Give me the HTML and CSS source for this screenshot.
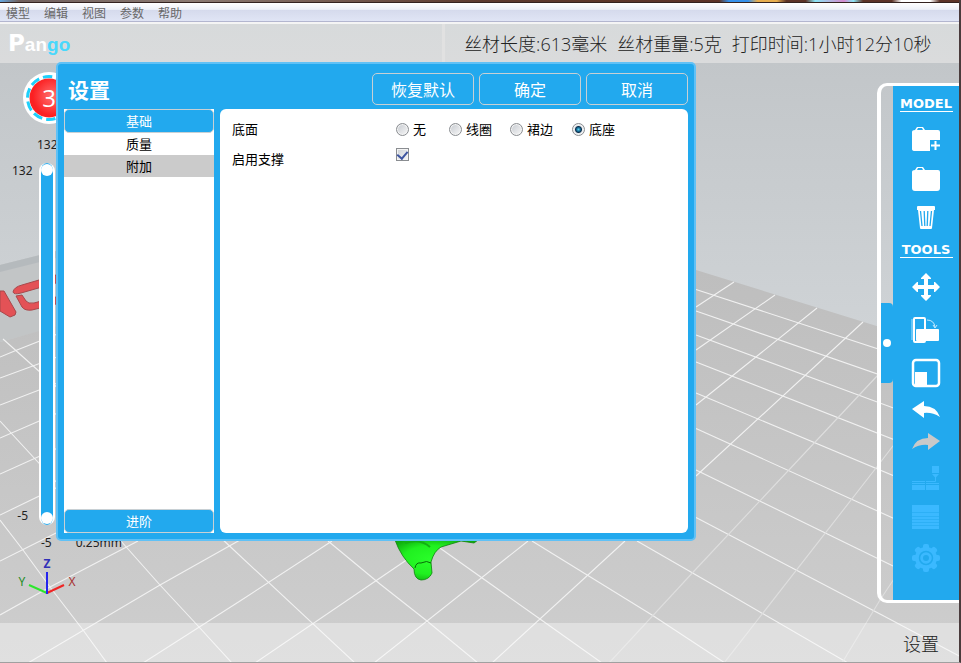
FILE: index.html
```html
<!DOCTYPE html>
<html lang="zh-CN">
<head>
<meta charset="utf-8">
<title>Pango</title>
<link rel="stylesheet" href="styles.css">
</head>
<body>
<div class="app">
  <svg class="scene" viewBox="0 0 961 663" preserveAspectRatio="none" aria-hidden="true">
    <defs>
      <linearGradient id="sky" x1="0" y1="60" x2="0" y2="350" gradientUnits="userSpaceOnUse"><stop offset="0" stop-color="#c2c6c9"/><stop offset="1" stop-color="#d0d4d7"/></linearGradient>
      <linearGradient id="floor" x1="0" y1="270" x2="0" y2="663" gradientUnits="userSpaceOnUse"><stop offset="0" stop-color="#bebebe"/><stop offset="1" stop-color="#cecece"/></linearGradient>
      <radialGradient id="green" cx="45%" cy="50%" r="60%"><stop offset="0" stop-color="#2aff2a"/><stop offset=".6" stop-color="#20f020"/><stop offset="1" stop-color="#0eaa0e"/></radialGradient>
    </defs>
    <rect width="961" height="663" fill="url(#sky)"/>
    <path d="M0 265 60 250V326L0 342Z" fill="#c2c5c6"/>
    <path d="M0 265 60 250V257L0 272Z" fill="#b5babd"/>
    <path d="M0 342 320 252 636 252 696 270 961 352V663H0Z" fill="url(#floor)"/>
    <g fill="#e35256" stroke="#a8484b" stroke-width="1">
      <path d="M0 291 4 291 16 312 15 315 10 317 0 311Z"/>
      <path d="M13 292Q14 287 22 285L56 275V283L21 293Q14 295 13 292Z"/>
      <path d="M16 296 22 295 26 301Q28 304 34 303L56 297V304L32 310Q25 311 22 307Z"/>
    </g>
    <g fill="none" stroke="#f1f1f1" stroke-width="1.1">
      <path d="M696 289.5 961 376M696 311 961 403M696 335 961 433M696 362 961 466M696 393 961 504M696 428.5 961 549M696 470 961 599M696 517.5 880 614 961 657M637 541 710 583 848 663M532 541 652 615 725 663M430 541 540 619 602 663M328 541 380 584 427 621 478 663M221 538 355 663M120 540 160 585 199 627 232 663M0 520 23 550 50 587 83 630 107 663M0 421 60 486M3 339 60 390"/>
      <path d="M734 282 696 307M775 295 696 350M817 308 696 405M863 322 696 476M625 541 492 663M528 541 374 663M433 541 405 561 255 663M332 541 240 601 143 663M240 540 160 585 28 663M138 541 50 587 0 615M60 531 0 561M60 486 0 515M60 447 0 474M60 412 0 438M60 382 0 405M60 356 0 378M60 333 17 350 0 357"/>
      <path stroke="#dedede" d="M878 375 696 569 609 663M916 416 876 468 724 663M920 540 880 600 842 663"/>
    </g>
    <path d="M395 540H478L474 543 461 541 441 547Q434 551 431 562L432 573Q429 580 421 580 414 579 414 569 401 557 395 540Z" fill="url(#green)" stroke="#0b830b" stroke-width=".8"/>
    <path d="M405 543Q420 538 430 547" fill="none" stroke="#13b013" stroke-width="2"/>
    <path d="M415 568Q416 562 421 563 427 560 431 563" fill="none" stroke="#096b09"/>
  </svg>

  <div class="desktop-edge"></div>
  <nav class="menubar" aria-label="菜单">
    <a href="#">模型</a><a href="#">编辑</a><a href="#">视图</a><a href="#">参数</a><a href="#">帮助</a>
  </nav>
  <header class="header">
    <h1 class="logo"><span class="logo-p">P</span>an<span class="logo-go">go</span></h1>
    <p class="stats"><span>丝材长度:613毫米</span><span>丝材重量:5克</span><span>打印时间:1小时12分10秒</span></p>
  </header>

  <main class="viewport">
    <div class="badge">
      <svg viewBox="0 0 54 54" width="54" height="54" aria-hidden="true">
        <defs><radialGradient id="red" cx="58%" cy="45%" r="50%"><stop offset="0" stop-color="#ff7070"/><stop offset="1" stop-color="#fb2022"/></radialGradient></defs>
        <circle cx="27" cy="27" r="26" fill="#fff"/>
        <circle cx="27" cy="27" r="21.500" fill="none" stroke="#1fd0fb" stroke-width="3" stroke-dasharray="9.500 4"/>
        <circle cx="27" cy="27" r="19.500" fill="url(#red)"/>
      </svg>
      <span>3</span>
    </div>
    <div class="layers">
      <span class="layer-label">132</span>
      <div class="layer-row">
        <div class="layer-ends"><span>132</span><span>-5</span></div>
        <div class="track">
          <input type="range" min="-5" max="132" value="132" aria-label="132">
          <input type="range" min="-5" max="132" value="-5" aria-label="-5">
        </div>
      </div>
      <div class="layer-foot"><span>-5</span><span>0.25mm</span></div>
    </div>
    <svg class="axes" viewBox="0 0 64 48" width="64" height="48" aria-hidden="true">
      <g fill="none" stroke-width="2"><path d="M31 40 13 32" stroke="#2ce62c"/><path d="M31 40 48 32" stroke="#f02424"/><path d="M31 41V19" stroke="#2525ee"/></g>
      <text x="31" y="15" class="axis-z">Z</text><text x="6" y="33" class="axis-y">Y</text><text x="56" y="33" class="axis-x">X</text>
    </svg>

    <aside class="toolbar">
      <button class="handle" type="button" aria-label="收起"></button>
      <div class="tools">
        <h2>MODEL</h2>
        <button class="tool" type="button" aria-label="添加"><svg width="28" height="26"><path d="M0 6Q0 4 3 4L5 1H11L13 4H26Q28 4 28 6V14H18V25H3Q0 25 0 23Z" fill="#fff"/><path d="M5 4 6 2H10L11 4Z" fill="#22a9ee"/><path d="M23.500 15V24M19 19.500H28" stroke="#fff" stroke-width="2"/></svg></button>
        <button class="tool" type="button" aria-label="打开"><svg width="28" height="26"><path d="M0 6Q0 4 3 4L5 1H11L13 4H26Q28 4 28 6V22Q28 25 25 25H3Q0 25 0 22Z" fill="#fff"/><path d="M5 4 6 2H10L11 4Z" fill="#22a9ee"/></svg></button>
        <button class="tool trash" type="button" aria-label="删除"><svg width="20" height="24"><path d="M1 1Q1 0 2 0H18Q19 0 19 1V4H1Z M2 4H18L16 22Q16 23 15 23H5Q4 23 4 22Z" fill="#fff"/><path d="M4.500 5 6 20M8.200 5 8.800 20M11.800 5 11.200 20M15.500 5 14 20" stroke="#22a9ee" stroke-width="1.300" fill="none"/></svg></button>
        <h2>TOOLS</h2>
        <button class="tool tall" type="button" aria-label="移动"><svg width="28" height="28" viewBox="0 0 28 28"><path d="M14 0 19 5V6H16V12H22V9H23L28 14 23 19H22V16H16V22H19V23L14 28 9 23V22H12V16H6V19H5L0 14 5 9H6V12H12V6H9V5Z" fill="#fff"/></svg></button>
        <button class="tool tall" type="button" aria-label="旋转"><svg width="30" height="28" viewBox="0 0 30 28"><path d="M1 3V24" stroke="#65c7f8" stroke-width="2"/><rect x="3" y="2" width="11" height="24" rx="1" fill="none" stroke="#fff" stroke-width="2"/><rect x="5" y="13" width="23" height="12" rx="1" fill="#fff"/><path d="M16 4Q23 4 24 11M22 9 24 12 26 9" fill="none" stroke="#c4eaff"/></svg></button>
        <button class="tool tall" type="button" aria-label="缩放"><svg width="30" height="30"><rect x="2" y="2" width="26" height="26" rx="3" fill="none" stroke="#fff" stroke-width="2.500"/><path d="M4 14H16V27H4Z" fill="#fff"/></svg></button>
        <button class="tool short" type="button" aria-label="撤销"><svg width="28" height="18"><path d="M0 8 12 0V5Q24 5 28 16 20 11 12 12V17Z" fill="#fff"/></svg></button>
        <button class="tool short" type="button" aria-label="重做"><svg width="28" height="18"><path d="M28 8 16 0V5Q4 5 0 16 8 11 16 12V17Z" fill="#c9c9c9"/></svg></button>
        <button class="tool" type="button" disabled aria-label="打印"><svg width="28" height="24"><path d="M20 0H27V7H20ZM20 8H27L23.500 12ZM0 19H13V24H0ZM14 19H27V24H14Z" fill="#3bb9ff"/><path d="M23.500 11V15.500H14M0 15.500H13M0 17.500H13M14 17.500H27" fill="none" stroke="#3bb9ff"/></svg></button>
        <button class="tool" type="button" disabled aria-label="切片"><svg width="28" height="24"><path d="M0 0H27V24H0Z" fill="#3bb9ff"/><path d="M0 7.500H27M0 11.500H27M0 14.500H27M0 17.500H27M0 20.500H27" stroke="#2db0f6"/></svg></button>
        <button class="tool tall" type="button" aria-label="设置"><svg width="28" height="28" viewBox="-14 -14 28 28"><g fill="#3bb9ff"><circle r="11"/><g id="teeth"><rect x="-3" y="-14" width="6" height="28" rx="2"/><rect x="-14" y="-3" width="28" height="6" rx="2"/></g><use href="#teeth" transform="rotate(45)"/></g><circle r="6.500" fill="none" stroke="#22a9ee" stroke-width="1.500"/><circle r="3" fill="#22a9ee"/></svg></button>
      </div>
    </aside>

    <form class="dialog" role="dialog" aria-labelledby="dialog-title">
      <div class="dialog-head">
        <h2 id="dialog-title">设置</h2>
        <button type="button">恢复默认</button><button type="button">确定</button><button type="button">取消</button>
      </div>
      <div class="dialog-body">
        <div class="categories">
          <button class="group" type="button">基础</button>
          <button class="item" type="button">质量</button>
          <button class="item selected" type="button">附加</button>
          <button class="group last" type="button">进阶</button>
        </div>
        <div class="panel">
          <div class="field">
            <span class="field-name" id="base-name">底面</span>
            <div class="options" role="radiogroup" aria-labelledby="base-name">
              <label><input type="radio" name="base">无</label>
              <label><input type="radio" name="base">线圈</label>
              <label><input type="radio" name="base">裙边</label>
              <label><input type="radio" name="base" checked>底座</label>
            </div>
          </div>
          <div class="field">
            <label class="field-name" for="support">启用支撑</label>
            <input id="support" class="check" type="checkbox" checked>
          </div>
        </div>
      </div>
    </form>
  </main>
  <footer class="footer">设置</footer>
</div>
</body>
</html>
```
FILE: styles.css
```css
* { box-sizing: border-box; }

body {
  margin: 0;
  font-family: "Noto Sans CJK SC", sans-serif;
  color: #000;
}

h1, h2, p { margin: 0; }

button {
  font: inherit;
  padding: 0;
  border: 0;
  background: none;
}

.app {
  position: relative;
  display: flex;
  flex-direction: column;
  height: 100vh;
  overflow: hidden;
  border-right: 2px solid #4a3b3c;
  border-bottom: 1px solid #a0a0a0;
}

.scene {
  position: absolute;
  left: 0;
  top: 0;
  width: 100vw;
  height: 100vh;
}

.desktop-edge {
  position: relative;
  height: 3px;
  border-bottom: 1px solid #33221f;
  background: linear-gradient(90deg, #65a7e0 0, #70605c 2%, #8b7a72 20%, #5c3a2e 50%, #5c3327 75%, #3590ea 76%, #3590ea 78%, #e7ae4f 79%, #e7ae4f 81%, #5c3327 82%, #5c3327 84%, #8be4f5 85%, #d58bcf 88%, #8be4f5 89%, #5c3327 90%, #5c3327 93%, #fff 94%, #fff 97%, #5c3327 98%);
}

.menubar {
  position: relative;
  display: flex;
  align-items: center;
  gap: 14px;
  height: 19px;
  padding: 1px 0 0 6px;
  background: linear-gradient(#fff 0, #edf0f8 36%, #d5daec 37%, #e0e5f5 100%);
  border-bottom: 1px solid #b3b6cf;
}

.menubar a {
  font-size: 12px;
  line-height: 16px;
  color: #686868;
  text-decoration: none;
}

.header {
  position: relative;
  display: flex;
  align-items: center;
  height: 41px;
  border-top: 2px solid #f4f4f4;
  background: linear-gradient(#d7dadb, #dadbdc);
}

.logo {
  flex: 0 0 calc(46% + 4px);
  height: 39px;
  padding-left: 8px;
  border-right: 3px solid #e1e1e1;
  font: bold 19px/38px "Liberation Sans", sans-serif;
  color: #fff;
}

.logo-p { font-size: 23px; font-family: "DejaVu Sans", sans-serif; }
.logo-go { color: #49d8fc; }

.stats {
  display: flex;
  gap: 10px;
  padding-left: 19px;
  font-family: "Open Sans", "Noto Sans CJK SC", sans-serif;
  font-weight: 300;
  font-size: 18px;
  line-height: 36px;
  white-space: nowrap;
  color: #222;
}

.viewport {
  position: relative;
  flex: 1;
}

.badge {
  position: absolute;
  left: 22px;
  top: 8px;
  display: grid;
  place-items: center;
  color: #fff;
  font: 24px/54px "Open Sans", sans-serif;
}

.badge > * { grid-area: 1 / 1; }

.layers {
  position: absolute;
  left: 12px;
  top: 74px;
  font: 12px/16px "Noto Sans", sans-serif;
  color: #222;
}

.layer-label { display: block; padding-left: 25px; }

.layer-row {
  display: flex;
  gap: 7px;
  margin-top: 10px;
}

.layer-ends {
  display: flex;
  flex-direction: column;
  justify-content: space-between;
  width: 20px;
  padding-bottom: 1px;
  text-align: right;
}

.layer-ends span:last-child { padding-right: 4px; }

.track {
  display: grid;
  width: 16px;
  height: 362px;
  padding: 1px 0;
  border: solid #fff;
  border-width: 0 2px;
  border-radius: 8px;
  background: #22a9ee;
}

.track input {
  grid-area: 1 / 1;
  width: 12px;
  height: 360px;
  margin: 0;
  appearance: none;
  writing-mode: vertical-lr;
  direction: rtl;
  background: none;
  pointer-events: none;
}

.track input::-webkit-slider-thumb {
  appearance: none;
  width: 12px;
  height: 12px;
  border-radius: 50%;
  background: #fff;
  pointer-events: auto;
}

.layer-foot {
  display: flex;
  gap: 24px;
  padding: 10px 0 0 29px;
}

.axes {
  position: absolute;
  left: 16px;
  bottom: 22px;
}

.axes text {
  font: 12px "Noto Sans", sans-serif;
  text-anchor: middle;
}

.axes .axis-z { fill: #3030b8; font-weight: bold; }
.axes .axis-y { fill: #258c25; }
.axes .axis-x { fill: #a83232; }

.toolbar {
  position: absolute;
  top: 20px;
  right: 0;
  bottom: 20px;
  display: flex;
  align-items: center;
  border: solid #fff;
  border-width: 3px 0 3px 4px;
  border-radius: 10px 0 0 10px;
}

.handle {
  display: grid;
  place-items: center;
  width: 12px;
  height: 80px;
  border-radius: 0 4px 4px 0;
  background: #22a9ee;
}

.handle::before {
  content: "";
  width: 8px;
  height: 8px;
  border-radius: 50%;
  background: #fff;
}

.tools {
  align-self: stretch;
  display: flex;
  flex-direction: column;
  align-items: center;
  width: 66px;
  padding-top: 10px;
  background: #22a9ee;
}

.tools h2 {
  width: 53px;
  height: 16px;
  margin-bottom: 7px;
  border-bottom: 1px solid #fff;
  font: bold 13px/16px "DejaVu Sans", sans-serif;
  text-align: center;
  color: #fff;
}

.tool {
  display: grid;
  place-items: center;
  flex: 0 0 40px;
  width: 44px;
}

.tool.trash { flex-basis: 38px; margin-bottom: 5px; }
.tool.tall { flex-basis: 43px; }
.tool.short { flex-basis: 32px; }
.tool:disabled { flex-basis: 39px; }

.dialog {
  position: absolute;
  left: 56px;
  top: -1px;
  display: flex;
  flex-direction: column;
  width: calc(66% + 7px);
  bottom: 82px;
  padding: 0 6px 6px;
  border: 2px solid #60c1f6;
  border-radius: 5px;
  background: #22a9ee;
}

.dialog-head {
  display: flex;
  align-items: center;
  gap: 5px;
  height: 45px;
  padding-top: 5px;
}

.dialog-head h2 {
  flex: 1;
  padding-left: 4px;
  font-size: 21px;
  line-height: 32px;
  color: #fff;
}

.dialog-head button {
  width: 102px;
  height: 32px;
  border: 1px solid #c8d0d4;
  border-radius: 5px;
  font-size: 16px;
  line-height: 30px;
  color: #fff;
}

.dialog-body {
  flex: 1;
  display: flex;
  gap: 6px;
}

.categories {
  display: flex;
  flex-direction: column;
  width: 150px;
  background: #fff;
}

.categories button {
  font-size: 13px;
  line-height: 20px;
}

.categories .group {
  height: 24px;
  border: 1px solid #c8d0d4;
  border-radius: 5px;
  background: #22a9ee;
  color: #fff;
}

.categories .item { height: 22px; }
.categories .selected { background: #cbcbcb; }
.categories .last { margin-top: auto; }

.panel {
  flex: 1;
  padding: 5px 12px;
  border-radius: 6px;
  background: #fff;
  font-size: 13px;
  line-height: 30px;
}

.field { display: flex; }
.field-name { width: 164px; }

.options {
  display: grid;
  grid-template-columns: 53px 61px 62px 60px;
}

.options label {
  display: flex;
  align-items: center;
  gap: 4px;
}

.options input {
  width: 13px;
  height: 13px;
  margin: 0;
  appearance: none;
  border: 1px solid #8a8d91;
  border-radius: 50%;
  background: linear-gradient(135deg, #c5c9cf, #f8f8f8);
  box-shadow: inset 0 0 0 1px #f4f4f4;
}

.options input:checked {
  background: radial-gradient(circle at 50% 50%, #5fd0f0 0, #13668f 2px, #102f4c 3px, #e4e8ec 4px);
}

.check {
  display: grid;
  place-items: center;
  width: 13px;
  height: 13px;
  margin: 4px 0 0;
  appearance: none;
  border: 1px solid #8a8d91;
  background: linear-gradient(135deg, #cdd2d8, #f6f6f6);
  box-shadow: inset 0 0 0 1px #f4f4f4;
}

.check:checked::before {
  content: "";
  width: 5px;
  height: 8px;
  margin-bottom: 2px;
  border: solid #3d55a0;
  border-width: 0 2px 2px 0;
  transform: rotate(40deg);
}

.footer {
  position: relative;
  height: 39px;
  padding-right: 20px;
  background: rgba(255, 255, 255, .37);
  font-size: 18px;
  font-weight: 300;
  line-height: 40px;
  text-align: right;
  color: #222;
}
```
